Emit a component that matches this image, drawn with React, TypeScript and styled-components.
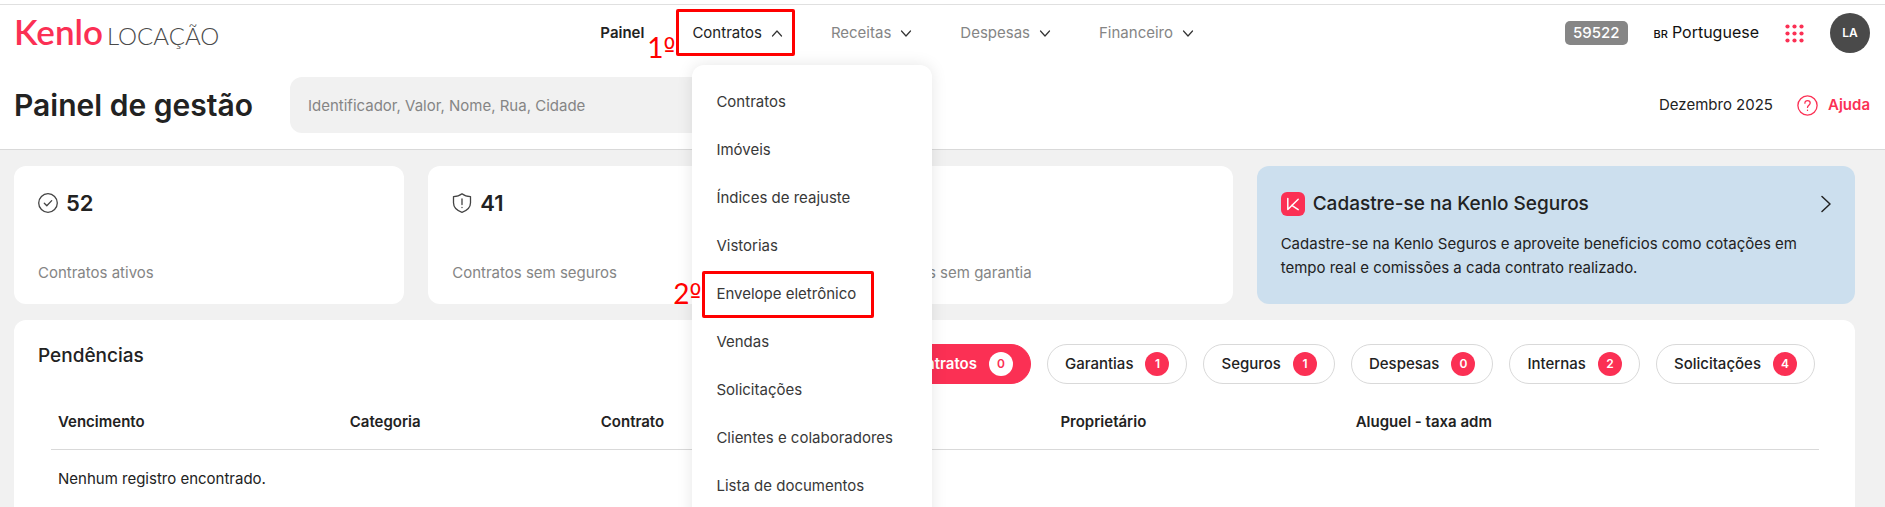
import React from 'react';
import styled, { createGlobalStyle, css } from 'styled-components';

const red = '#fb3054';
const ink = '#222222';
const muted = '#858585';
const line = '#d9d9d9';

const GlobalStyle = createGlobalStyle`
  * { box-sizing: border-box; }
  body {
    margin: 0;
    background: #f1f1f1;
    color: ${ink};
    font: 15px/24px Inter, "Liberation Sans", sans-serif;
  }
  button, input { font: inherit; color: inherit; }
  a { color: inherit; text-decoration: none; }
`;

const Page = styled.div`
  min-height: 100vh;
  max-height: 100vh;
  overflow: hidden;
  padding-top: 4px;
  background: #fff;
`;

const Header = styled.header`
  border-top: 1px solid #e0e0e0;
  border-bottom: 1px solid ${line};
  padding: 8px 15px 16px 14px;
`;

const TopBar = styled.div`
  display: flex;
  align-items: center;
  justify-content: space-between;
  height: 40px;
`;

const Logo = styled.a`
  display: flex;
  align-items: baseline;
  gap: 4px;
  font-family: Lato, sans-serif;
  line-height: 40px;
`;

const Brand = styled.span`
  color: ${red};
  font-size: 35px;
  font-weight: 600;
`;

const Product = styled.span`
  color: #4a4a4a;
  font-size: 24px;
  font-weight: 300;
`;

const Nav = styled.nav`
  display: flex;
  gap: 48px;
  padding-left: 10px;
`;

const NavItem = styled.div`
  position: relative;
`;

const NavButton = styled.button<{ $tone: 'current' | 'open' | 'idle' }>`
  display: flex;
  align-items: center;
  gap: 9px;
  padding: 0;
  border: 0;
  background: none;
  white-space: nowrap;
  color: ${({ $tone }) => ($tone === 'idle' ? muted : ink)};
  font-weight: ${({ $tone }) => ($tone === 'current' ? 600 : 400)};
`;

const Menu = styled.ul`
  position: absolute;
  z-index: 2;
  top: 44px;
  left: 0;
  width: 240px;
  margin: 0;
  padding: 13px 0 24px;
  list-style: none;
  border-radius: 12px;
  background: #fff;
  box-shadow: 0 0 16px rgba(0, 0, 0, 0.1);
`;

const MenuItem = styled.li`
  position: relative;
  a {
    display: block;
    padding: 12px 24px;
    color: #383838;
  }
`;

const frame = css`
  position: absolute;
  z-index: 3;
  border: 3px solid #ff0000;
  border-radius: 2px;
  pointer-events: none;
`;

const NavMark = styled.span`
  ${frame}
  inset: -12px -12px -11px -16px;
`;

const ItemMark = styled.span`
  ${frame}
  inset: 1px 58px 0 10px;
`;

const StepLabel = styled.span<{ $bottom: number }>`
  position: absolute;
  right: 100%;
  bottom: ${({ $bottom }) => $bottom}px;
  padding-right: 4px;
  color: #ff0000;
  font: 28px/32px Lato, sans-serif;
  white-space: nowrap;
`;

const Ordinal = styled.span`
  font-family: "DejaVu Sans Condensed", "DejaVu Sans", sans-serif;
  font-size: 28px;
`;

const Step = ({ n, bottom }: { n: number; bottom: number }) => (
  <StepLabel $bottom={bottom}>{n}<Ordinal>º</Ordinal></StepLabel>
);

const Account = styled.div`
  display: flex;
  align-items: center;
  gap: 26px;
`;

const Code = styled.span`
  padding: 0 8px;
  border-radius: 5px;
  background: #868686;
  color: #fff;
  font-weight: 500;
`;

const Language = styled.button`
  display: flex;
  align-items: baseline;
  gap: 4px;
  padding: 0;
  border: 0;
  background: none;
  color: #111;
  font-size: 16px;
  small {
    font-size: 11px;
    font-weight: 500;
  }
`;

const IconButton = styled.button`
  display: flex;
  padding: 0;
  border: 0;
  background: none;
`;

const Avatar = styled.button`
  width: 40px;
  height: 40px;
  padding: 0;
  border: 0;
  border-radius: 50%;
  background: #4a4a4a;
  color: #fff;
  font-size: 12px;
  font-weight: 600;
`;

const TitleBar = styled.div`
  display: flex;
  align-items: center;
  height: 56px;
  margin-top: 24px;
`;

const PageTitle = styled.h1`
  flex: 0 0 276px;
  margin: 0;
  font-size: 30px;
  line-height: 40px;
  font-weight: 600;
  white-space: nowrap;
`;

const Search = styled.input`
  width: 560px;
  height: 56px;
  padding: 0 18px;
  border: 0;
  border-radius: 12px;
  background: #f1f1f1;
  &::placeholder { color: ${muted}; opacity: 1; }
`;

const TitleSide = styled.div`
  display: flex;
  align-items: center;
  gap: 24px;
  margin-left: auto;
`;

const Help = styled.a`
  display: flex;
  align-items: center;
  gap: 10px;
  color: ${red};
  font-weight: 600;
`;

const Main = styled.main`
  display: flex;
  flex-direction: column;
  gap: 16px;
  min-height: 100vh;
  padding: 16px 30px 16px 14px;
  background: #f1f1f1;
`;

const Cards = styled.section`
  display: grid;
  grid-template-columns: repeat(3, 390fr) 598fr;
  gap: 24px;
`;

const Card = styled.article`
  display: flex;
  flex-direction: column;
  justify-content: space-between;
  height: 138px;
  padding: 25px 24px 19px;
  border-radius: 12px;
  background: #fff;
  color: ${muted};
`;

const Count = styled.div`
  display: flex;
  align-items: center;
  gap: 8px;
  color: ${ink};
  font-size: 22px;
  font-weight: 600;
`;

const Promo = styled.a`
  display: flex;
  flex-direction: column;
  gap: 16px;
  height: 138px;
  padding: 26px 24px 24px;
  border-radius: 12px;
  background: #ccdfee;
`;

const PromoHead = styled.div`
  display: flex;
  align-items: center;
  gap: 8px;
  font-size: 19px;
  font-weight: 500;
  svg:last-child { margin-left: auto; }
`;

const PromoText = styled.p`
  max-width: 520px;
  margin: 0;
`;

const Panel = styled.section`
  padding: 24px;
  border-radius: 12px;
  background: #fff;
`;

const PanelHead = styled.div`
  display: flex;
  justify-content: space-between;
  padding-right: 16px;
`;

const PanelTitle = styled.h2`
  margin: 0;
  font-size: 19px;
  line-height: 24px;
  font-weight: 500;
`;

const Pills = styled.div`
  display: flex;
  gap: 16px;
`;

const Pill = styled.button<{ $active?: boolean }>`
  display: flex;
  align-items: center;
  gap: 12px;
  height: 40px;
  padding: 0 17px;
  border: 1px solid ${({ $active }) => ($active ? red : line)};
  border-radius: 20px;
  background: ${({ $active }) => ($active ? red : '#fff')};
  color: ${({ $active }) => ($active ? '#fff' : ink)};
  font-weight: ${({ $active }) => ($active ? 600 : 500)};
`;

const Bubble = styled.span<{ $active?: boolean }>`
  width: 24px;
  border-radius: 50%;
  background: ${({ $active }) => ($active ? '#fff' : red)};
  color: ${({ $active }) => ($active ? red : '#fff')};
  font-size: 12px;
  font-weight: 600;
  text-align: center;
`;

const Table = styled.table`
  width: calc(100% - 25px);
  margin: 9px 12px 0 13px;
  table-layout: fixed;
  border-collapse: collapse;
  th, td {
    padding: 17px 7px 15px;
    text-align: left;
  }
  th {
    border-bottom: 1px solid ${line};
    font-weight: 600;
  }
`;

const HeadCell = styled.th<{ $share?: number }>`
  width: ${({ $share }) => ($share ? `${$share}%` : 'auto')};
`;

const Chevron = ({ up = false }: { up?: boolean }) => (
  <svg width="12" height="12" viewBox="0 0 12 12" fill="none" stroke="#333" strokeWidth="1.2" strokeLinecap="round" strokeLinejoin="round" aria-hidden="true">
    <path d={up ? 'M1.5 9 6 4l4.5 5' : 'M1.5 4 6 9l4.5-5'} />
  </svg>
);

const CheckIcon = () => (
  <svg width="20" height="20" viewBox="0 0 20 20" fill="none" stroke="#444" strokeWidth="1.3" strokeLinecap="round" strokeLinejoin="round" aria-hidden="true">
    <circle cx="10" cy="10" r="9.3" />
    <path d="m6.300 10.300 2.500 2.500 4.900-5.200" />
  </svg>
);

const ShieldIcon = () => (
  <svg width="20" height="20" viewBox="0 0 20 20" fill="none" stroke="#444" strokeWidth="1.3" strokeLinecap="round" strokeLinejoin="round" aria-hidden="true">
    <path d="M10 .8c2.300 1.900 5 2.800 8.500 2.800v6.200c0 4.500-3.200 7.700-8.500 9.500-5.300-1.800-8.500-5-8.500-9.500V3.600C5 3.600 7.700 2.700 10 .8Z" />
    <path d="M10 5.800v5.700M10 14.300v.2" />
  </svg>
);

const AppsIcon = () => (
  <svg width="19" height="19" viewBox="0 0 19 19" fill={red} aria-hidden="true">
    {[2.5, 9.5, 16.5].map((y) => [2.5, 9.5, 16.5].map((x) => <circle key={`${x}-${y}`} cx={x} cy={y} r="2.1" />))}
  </svg>
);

const HelpIcon = () => (
  <svg width="21" height="21" viewBox="0 0 21 21" fill="none" stroke={red} strokeWidth="1.3" strokeLinecap="round" aria-hidden="true">
    <circle cx="10.5" cy="10.5" r="9.6" />
    <path d="M7.900 8.200c0-1.600 1.100-2.600 2.600-2.600s2.700 1 2.700 2.500c0 2-2.700 2.200-2.700 4.300M10.500 15.200v.2" />
  </svg>
);

const SegurosIcon = () => (
  <svg width="24" height="24" viewBox="0 0 24 24" fill="none" aria-hidden="true">
    <rect width="24" height="24" rx="6" fill={red} />
    <path d="M6.800 6.500v11L17.200 7.200M10.800 13.400l6.400 4.200" stroke="#fff" strokeWidth="1.5" strokeLinecap="round" strokeLinejoin="round" />
  </svg>
);

const ArrowIcon = () => (
  <svg width="10" height="18" viewBox="0 0 10 18" fill="none" stroke="#222" strokeWidth="1.5" strokeLinecap="round" strokeLinejoin="round" aria-hidden="true">
    <path d="m1 1.500 8 7.500-8 7.500" />
  </svg>
);

const menuItems = [
  'Contratos', 'Imóveis', 'Índices de reajuste', 'Vistorias', 'Envelope eletrônico',
  'Vendas', 'Solicitações', 'Clientes e colaboradores', 'Lista de documentos',
];

const pending = [
  { name: 'Contratos', count: 0 }, { name: 'Garantias', count: 1 }, { name: 'Seguros', count: 1 },
  { name: 'Despesas', count: 0 }, { name: 'Internas', count: 2 }, { name: 'Solicitações', count: 4 },
];

export default function App() {
  return (
    <Page>
      <GlobalStyle />
      <Header>
        <TopBar>
          <Logo href="#"><Brand>Kenlo</Brand><Product>LOCAÇÃO</Product></Logo>
          <Nav>
            <NavItem><NavButton $tone="current">Painel</NavButton></NavItem>
            <NavItem>
              <NavButton $tone="open" aria-expanded="true">Contratos<Chevron up /></NavButton>
              <NavMark><Step n={1} bottom={-12} /></NavMark>
              <Menu>
                {menuItems.map((item) => (
                  <MenuItem key={item}>
                    <a href="#">{item}</a>
                    {item === 'Envelope eletrônico' && <ItemMark><Step n={2} bottom={4} /></ItemMark>}
                  </MenuItem>
                ))}
              </Menu>
            </NavItem>
            {['Receitas', 'Despesas', 'Financeiro'].map((name) => (
              <NavItem key={name}><NavButton $tone="idle">{name}<Chevron /></NavButton></NavItem>
            ))}
          </Nav>
          <Account>
            <Code>59522</Code>
            <Language><small>BR</small>Portuguese</Language>
            <IconButton aria-label="Aplicativos"><AppsIcon /></IconButton>
            <Avatar>LA</Avatar>
          </Account>
        </TopBar>
        <TitleBar>
          <PageTitle>Painel de gestão</PageTitle>
          <Search type="search" aria-label="Pesquisar" placeholder="Identificador, Valor, Nome, Rua, Cidade" />
          <TitleSide>
            <span>Dezembro 2025</span>
            <Help href="#"><HelpIcon />Ajuda</Help>
          </TitleSide>
        </TitleBar>
      </Header>
      <Main>
        <Cards>
          <Card><Count><CheckIcon />52</Count><span>Contratos ativos</span></Card>
          <Card><Count><ShieldIcon />41</Count><span>Contratos sem seguros</span></Card>
          <Card><Count /><span>Contratos sem garantia</span></Card>
          <Promo href="#">
            <PromoHead><SegurosIcon />Cadastre-se na Kenlo Seguros<ArrowIcon /></PromoHead>
            <PromoText>Cadastre-se na Kenlo Seguros e aproveite beneficios como cotações em tempo real e comissões a cada contrato realizado.</PromoText>
          </Promo>
        </Cards>
        <Panel>
          <PanelHead>
            <PanelTitle>Pendências</PanelTitle>
            <Pills>
              {pending.map(({ name, count }, i) => (
                <Pill key={name} $active={i === 0}>{name}<Bubble $active={i === 0}>{count}</Bubble></Pill>
              ))}
            </Pills>
          </PanelHead>
          <Table>
            <thead>
              <tr>
                <HeadCell $share={16.5}>Vencimento</HeadCell>
                <HeadCell $share={14.2}>Categoria</HeadCell>
                <HeadCell $share={26}>Contrato</HeadCell>
                <HeadCell $share={16.7}>Proprietário</HeadCell>
                <HeadCell>Aluguel - taxa adm</HeadCell>
              </tr>
            </thead>
            <tbody>
              <tr><td colSpan={5}>Nenhum registro encontrado.</td></tr>
            </tbody>
          </Table>
        </Panel>
      </Main>
    </Page>
  );
}
